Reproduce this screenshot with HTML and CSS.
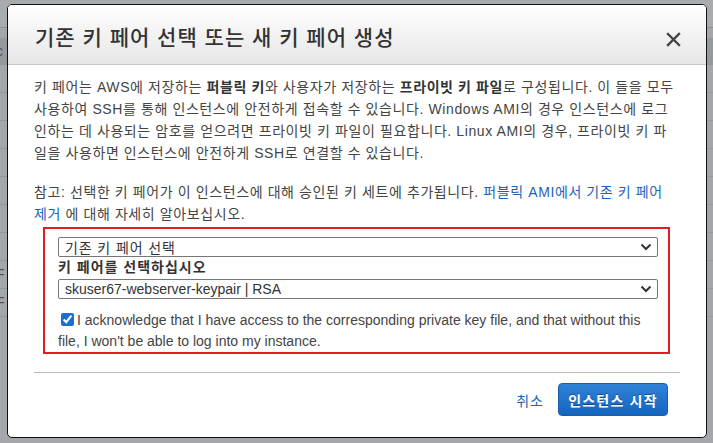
FILE: index.html
```html
<!DOCTYPE html>
<html lang="ko">
<head>
<meta charset="utf-8">
<link rel="stylesheet" href="styles.css">
</head>
<body>
<div class="page">
  <div class="row row-top"></div>
  <div class="row row-dark"><span class="glyph">c</span></div>
  <div class="row"></div>
  <div class="row"></div>
  <div class="row"></div>
  <div class="row"></div>
  <div class="row"></div>
  <div class="row"></div>
  <div class="row"></div>
  <div class="row"><span class="glyph">F</span></div>
  <div class="row"><span class="glyph">F</span></div>
</div>

<div class="modal">
  <div class="modal-header">
    <h2 class="modal-title">기존 키 페어 선택 또는 새 키 페어 생성</h2>
    <svg class="close" width="15" height="15" viewBox="0 0 15 15"><path d="M2 2 L13 13 M13 2 L2 13" stroke="#444" stroke-width="2.4" stroke-linecap="square"/></svg>
  </div>
  <div class="modal-body">
    <p class="para">키 페어는 AWS에 저장하는 <b>퍼블릭 키</b>와 사용자가 저장하는 <b>프라이빗 키 파일</b>로 구성됩니다. 이 들을 모두 사용하여 SSH를 통해 인스턴스에 안전하게 접속할 수 있습니다. Windows AMI의 경우 인스턴스에 로그인하는 데 사용되는 암호를 얻으려면 프라이빗 키 파일이 필요합니다. Linux AMI의 경우, 프라이빗 키 파일을 사용하면 인스턴스에 안전하게 SSH로 연결할 수 있습니다.</p>
    <p class="para note">참고: 선택한 키 페어가 이 인스턴스에 대해 승인된 키 세트에 추가됩니다. <a class="link" href="#">퍼블릭 AMI에서 기존 키 페어 제거</a> 에 대해 자세히 알아보십시오.</p>
    <div class="highlight">
      <div class="select">
        <span class="ko">기존 키 페어 선택</span>
        <svg width="12" height="8" viewBox="0 0 12 8"><path d="M1.5 1.5 L6 6 L10.5 1.5" fill="none" stroke="#333" stroke-width="2"/></svg>
      </div>
      <div class="label">키 페어를 선택하십시오</div>
      <div class="select select2">
        <span>skuser67-webserver-keypair | RSA</span>
        <svg width="12" height="8" viewBox="0 0 12 8"><path d="M1.5 1.5 L6 6 L10.5 1.5" fill="none" stroke="#333" stroke-width="2"/></svg>
      </div>
      <p class="ack"><input type="checkbox" class="cb" checked>I acknowledge that I have access to the corresponding private key file, and that without this file, I won't be able to log into my instance.</p>
    </div>
    <div class="divider"></div>
    <div class="footer">
      <a class="cancel" href="#">취소</a>
      <button class="launch">인스턴스 시작</button>
    </div>
  </div>
</div>
</body>
</html>
```
FILE: styles.css
```css
html, body {
  margin: 0;
  padding: 0;
}
body {
  width: 713px;
  height: 443px;
  overflow: hidden;
  background: #a3a6aa;
  font-family: "Liberation Sans", "Noto Sans CJK KR", sans-serif;
  position: relative;
}
.page {
  display: flex;
  flex-direction: column;
}
.row {
  height: 27px;
  border-bottom: 1px solid #94979b;
  position: relative;
}
.row-top {
  height: 27px;
  background: #a9acaf;
  border-bottom: 1px solid #8d9094;
  margin-bottom: 10px;
}
.row-dark {
  background: #959a9e;
  height: 26px;
}
.glyph {
  font-size: 14px;
  color: #5a4b5e;
  line-height: 27px;
  margin-left: -4px;
}
.modal {
  position: absolute;
  left: 7px;
  top: 4px;
  width: 698px;
  height: 432px;
  background: #fff;
  border: 1px solid #111;
  border-radius: 5px;
  overflow: hidden;
}
.modal-header {
  height: 60px;
  box-sizing: border-box;
  border-bottom: 1px solid #c8c8c8;
  background: linear-gradient(#ffffff, #e6e6e6);
  display: flex;
  align-items: center;
  justify-content: space-between;
  padding: 3px 25px 0 27px;
}
.modal-title {
  margin: 0;
  font-size: 21px;
  font-weight: 500;
  color: #333;
  letter-spacing: 1px;
}
.close {
  margin-top: 6px;
}
.modal-body {
  padding: 11px 26px 0 26px;
  color: #444;
  font-size: 14px;
}
.para {
  margin: 0;
  line-height: 22px;
  letter-spacing: 0.6px;
}
.para b {
  font-weight: bold;
  color: #333;
}
.note {
  margin-top: 17px;
}
.link {
  color: #1b63b8;
  text-decoration: none;
}
.highlight {
  margin: 2px 10px 0 9px;
  border: 2px solid #e31b23;
  padding: 8px 10px 0 13px;
}
.select {
  height: 20px;
  box-sizing: border-box;
  border: 1px solid #767676;
  border-radius: 2px;
  display: flex;
  align-items: center;
  justify-content: space-between;
  padding: 0 5px 0 6px;
  color: #333;
  font-size: 14px;
}
.ko {
  letter-spacing: 0.9px;
}
.label {
  font-weight: bold;
  color: #333;
  line-height: 20px;
  font-size: 14px;
  letter-spacing: 1px;
}
.select2 {
  margin-top: 2px;
}
.ack {
  margin: 11px 0 0 0;
  line-height: 21px;
  color: #444;
}
.cb {
  width: 13px;
  height: 13px;
  margin: 0 3px 0 3px;
  vertical-align: -1px;
  accent-color: #1a6fd0;
}
.divider {
  margin-top: 18px;
  border-top: 1px solid #bdbdbd;
}
.footer {
  display: flex;
  justify-content: flex-end;
  align-items: center;
  padding: 10px 12px 0 0;
  gap: 14px;
}
.cancel {
  color: #1b63b8;
  text-decoration: none;
  font-size: 14px;
  letter-spacing: 1px;
}
.launch {
  width: 110px;
  height: 33px;
  border: 1px solid #1a5ea8;
  border-radius: 4px;
  background: linear-gradient(#2f82d8, #1565be);
  color: #fff;
  font-family: "Liberation Sans", "Noto Sans CJK KR", sans-serif;
  font-size: 14px;
  font-weight: bold;
  letter-spacing: 1.2px;
  text-shadow: 0 -1px 0 rgba(0,0,0,0.35);
  padding: 0;
}
```
